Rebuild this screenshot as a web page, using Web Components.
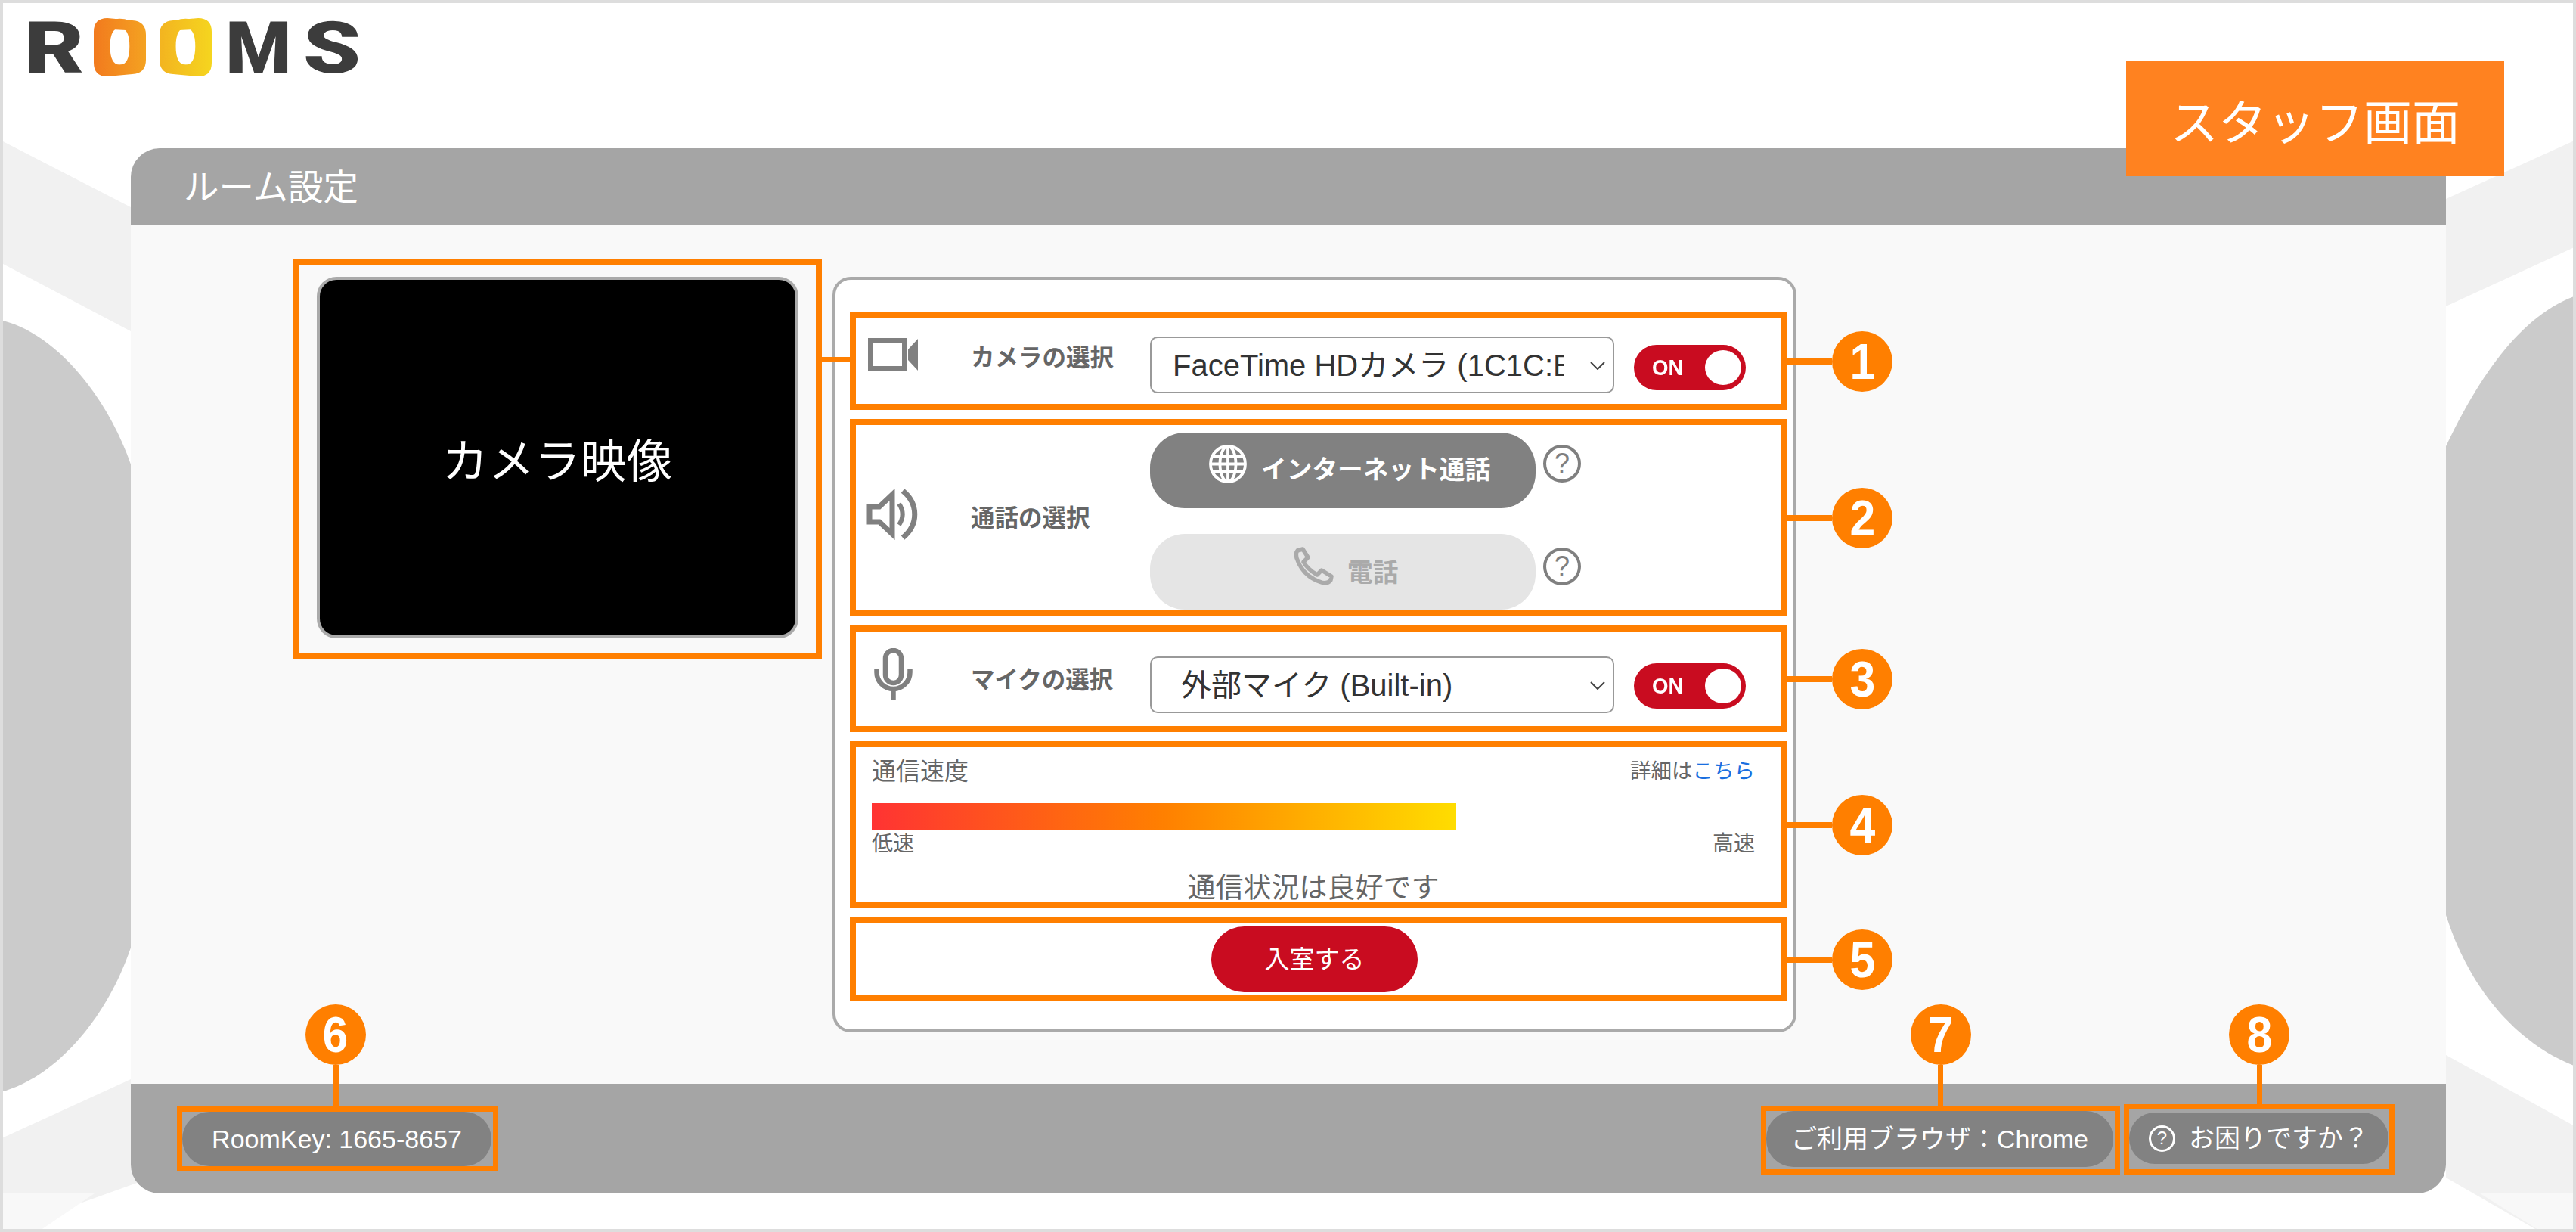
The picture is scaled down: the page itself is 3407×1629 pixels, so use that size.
<!DOCTYPE html>
<html lang="ja"><head><meta charset="utf-8"><title>ルーム設定</title>
<style>
html,body{margin:0;padding:0;background:#fff}
body{font-family:"Liberation Sans","Noto Sans CJK JP",sans-serif;color:#666}
</style></head><body>
<x-app>
  <x-bg></x-bg>
  <x-logo></x-logo>
  <x-staff-tag>スタッフ画面</x-staff-tag>
  <x-room-card>
    <span slot="title">ルーム設定</span>
    <x-camera-view>カメラ映像</x-camera-view>
    <x-settings-panel>
      <x-device-row style="--h:129px;--it:26px;--lt:36px;--ct:24px;--tt:35px">
        <x-icon slot="icon" name="camera"></x-icon>
        <span slot="label">カメラの選択</span>
        <x-select-box slot="control" style="--pl:28px;--tw:518px">FaceTime HDカメラ (1C1C:E</x-select-box>
        <x-toggle slot="toggle"></x-toggle>
        <x-callout n="1"></x-callout>
      </x-device-row>
      <x-device-row style="--h:261px;--it:84px;--lt:107px;--ct:10px;--tt:0px">
        <x-icon slot="icon" name="speaker"></x-icon>
        <span slot="label">通話の選択</span>
        <x-call-options slot="control">
          <x-call-button on style="--pad:78px;--gap:19px;--help:16px"><x-icon slot="icon" name="globe" style="margin-bottom:18px"></x-icon>インターネット通話</x-call-button>
          <x-call-button style="--pad:190px;--gap:17px;--help:18px"><x-icon slot="icon" name="phone" style="margin-bottom:15px"></x-icon><span style="margin-top:4px">電話</span></x-call-button>
        </x-call-options>
        <x-callout n="2"></x-callout>
      </x-device-row>
      <x-device-row style="--h:141px;--it:22px;--lt:48px;--ct:33px;--tt:42px">
        <x-icon slot="icon" name="mic"></x-icon>
        <span slot="label">マイクの選択</span>
        <x-select-box slot="control" style="--pl:39px;--tw:507px">外部マイク (Built-in)</x-select-box>
        <x-toggle slot="toggle"></x-toggle>
        <x-callout n="3"></x-callout>
      </x-device-row>
      <x-speed-meter>
        <x-callout n="4"></x-callout>
      </x-speed-meter>
      <x-enter-row>
        入室する
        <x-callout slot="callout" n="5"></x-callout>
      </x-enter-row>
    </x-settings-panel>
    <x-footer-pill slot="footer-left" n="6" style="--w:425px;--hh:86px;--pw:409px;--ph:72px;--pt:0px;--mt:30px;--len:55px;--dx:-3px">RoomKey: 1665-8657</x-footer-pill>
    <x-footer-pill slot="footer-right" n="7" style="--w:475px;--hh:91px;--pw:459px;--ph:74px;--pt:0px;--mt:29px;--len:54px;--dx:0px;--lw:7px">ご利用ブラウザ：Chrome</x-footer-pill>
    <x-footer-pill slot="footer-right" n="8" style="--w:358px;--hh:93px;--pw:343px;--ph:68px;--pt:4px;--mt:27px;--len:52px;--dx:0px;--lw:7px"><x-help-icon style="--s:35px;--b:3px;--c:#fff;--f:24px;margin-right:18px"></x-help-icon>お困りですか？</x-footer-pill>
  </x-room-card>
</x-app>
<script>
const ORANGE='#ff7f00';
function def(name,html,setup){
  customElements.define(name,class extends HTMLElement{
    constructor(){super();this.attachShadow({mode:'open'}).innerHTML=typeof html==='function'?html(this):html;}
    connectedCallback(){if(setup)setup(this)}
  });
}
const ICONS={
camera:`<svg width="66" height="44" viewBox="0 0 66 44"><rect x="3.5" y="3.5" width="45" height="37" fill="none" stroke="#808080" stroke-width="7"/><polygon points="53,15 66,1 66,43 53,29" fill="#808080"/></svg>`,
speaker:`<svg width="70" height="68" viewBox="0 0 70 68" fill="none" stroke="#808080" stroke-width="7"><path d="M4 24H17L34 8V60L17 44H4Z"/><path d="M43 20C49 29 49 39 43 48" stroke-width="6"/><path d="M48 3C69 20 69 48 48 65"/></svg>`,
mic:`<svg width="51" height="69" viewBox="0 0 51 69" fill="none" stroke="#808080" stroke-width="6.5"><rect x="15" y="3" width="21" height="43" rx="10.5"/><path d="M3.5 28V32A22 22 0 0 0 47.5 32V28"/><path d="M25.5 54V69"/></svg>`,
globe:`<svg width="50" height="51" viewBox="0 0 50 51" fill="none" stroke="#fff" stroke-width="3.8"><ellipse cx="25" cy="25.5" rx="23" ry="23.5"/><ellipse cx="25" cy="25.5" rx="10.5" ry="23.5"/><path d="M25 2V49M4 15H46M2 25.5H48M4 36H46"/></svg>`,
phone:`<svg width="54" height="51" viewBox="0 0 54 51" fill="none" stroke="#aaa" stroke-width="5.5" stroke-linejoin="round"><path d="M5 5 12 3 19 14 13 20C17 27 24 33 31 37L37 31 50 39 49 44C46 48 41 49 34 46 20 41 9 30 4 15 3 10 3 7 5 5Z"/></svg>`
};
def('x-icon',el=>`<style>:host{display:flex;align-items:center;justify-content:center;flex:none;line-height:0}svg{display:block}</style>`+ICONS[el.getAttribute('name')]);

def('x-app',`<style>
:host{display:block;position:relative;box-sizing:border-box;width:3407px;height:1629px;border:4px solid #ddd;background:#fff;overflow:hidden}
</style><slot></slot>`);

def('x-bg',`<style>:host{position:absolute;inset:-4px;display:block}svg{display:block}</style>
<svg width="3407" height="1629" viewBox="0 0 3407 1629">
<polygon points="0,185 173,274 173,438 0,347" fill="#f1f1f1"/>
<polygon points="0,1506 173,1427 184,1563 0,1629" fill="#f1f1f1"/>
<polygon points="0,1578 125,1578 50,1629 0,1629" fill="#f8f8f8"/>
<path d="M0 423C70 438 140 520 173 614V1253C140 1350 70 1427 0 1444Z" fill="#cbcbcb"/>
<polygon points="3407,185 3235,263 3235,405 3407,326" fill="#f1f1f1"/>
<polygon points="3235,1395 3407,1490 3407,1629 3360,1629 3235,1557" fill="#f1f1f1"/>
<polygon points="3280,1578 3407,1578 3407,1629 3362,1629" fill="#f8f8f8"/>
<path d="M3407 391C3340 415 3285 485 3235 590V1210C3270 1320 3340 1385 3407 1410Z" fill="#cbcbcb"/>
</svg>`);

const RING='M18 0 51 3Q69 4 69 22V55Q69 73 51 74L18 77Q0 77 0 59V18Q0 0 18 0ZM24 15Q20 15 20 20V57Q20 62 24 62L43 61Q49 61 49 55V22Q49 17 43 16Z';
def('x-logo',`<style>
:host{display:flex;position:relative;height:192px;box-sizing:border-box;padding:13px 0 0 30px;font:900 94px/94px Roboto,"Liberation Sans",sans-serif;color:#3c3c3c;align-items:flex-start}
span{display:block;text-align:center;flex:none;transform-origin:50% 50%}
.r{width:75px;transform:scaleX(1.3)}
.o{position:relative;width:69px;margin-top:7px;font:700 108px/89px "Liberation Mono",monospace;}
.o svg{position:absolute;left:0;top:0;display:block}
.o b{position:relative;display:block;font-weight:700;-webkit-background-clip:text;background-clip:text;color:transparent}
.o1{margin-left:15px}.o1 b{background-image:linear-gradient(90deg,#f27a1e,#f4a221)}
.o2{margin-left:18px}.o2 b{background-image:linear-gradient(90deg,#f3b420,#f5d51f)}
.m{width:86px;margin-left:19px;transform:scaleX(1.06)}
.s{width:70px;margin-left:19px;transform:scaleX(1.3)}
</style><span class="r">R</span><span class="o o1"><svg width="69" height="77" viewBox="0 0 69 77"><defs><linearGradient id="a"><stop offset="0" stop-color="#f27a1e"/><stop offset="1" stop-color="#f4a221"/></linearGradient></defs><path fill="url(#a)" fill-rule="evenodd" d="${RING}"/></svg><b>O</b></span><span class="o o2"><svg width="69" height="77" viewBox="0 0 69 77"><defs><linearGradient id="b" x1="1" x2="0"><stop offset="0" stop-color="#f3b420"/><stop offset="1" stop-color="#f5d51f"/></linearGradient></defs><path fill="url(#b)" fill-rule="evenodd" transform="matrix(-1 0 0 1 69 0)" d="${RING}"/></svg><b>O</b></span><span class="m">M</span><span class="s">S</span>`);

def('x-staff-tag',`<style>
:host{position:absolute;left:2808px;top:76px;width:500px;height:153px;background:#ff8220;color:#fff;display:flex;align-items:center;justify-content:center;font:400 64px/1 "Noto Sans CJK JP",sans-serif;z-index:3}
</style><slot></slot>`);

def('x-room-card',`<style>
:host{display:block;position:relative;margin-left:169px;width:3062px}
header{height:101px;box-sizing:border-box;background:#a5a5a5;border-radius:38px 38px 0 0;padding:0 0 4px 70px;display:flex;align-items:center;color:#fff;font:400 46.5px/1 "Noto Sans CJK JP",sans-serif}
main{height:1136px;box-sizing:border-box;background:#f9f9f9;display:flex;align-items:flex-start;padding-left:214px}
footer{height:145px;box-sizing:border-box;background:#a5a5a5;border-radius:0 0 38px 38px;display:flex;align-items:flex-start;padding:0 68px 0 61px;justify-content:space-between}
.right{display:flex;gap:5px;align-items:flex-start}
</style><header><slot name="title"></slot></header><main><slot></slot></main>
<footer><slot name="footer-left"></slot><div class="right"><slot name="footer-right"></slot></div></footer>`);

def('x-camera-view',`<style>
:host{display:flex;flex:none;position:relative;box-sizing:border-box;width:700px;height:529px;margin-top:45px;border:8px solid ${ORANGE};align-items:center;justify-content:center;padding-bottom:3px}
.v{width:637px;height:478px;box-sizing:border-box;border:4px solid #aaa;border-radius:26px;background:#000;color:#fff;display:flex;align-items:center;justify-content:center;font:400 61px/1 "Noto Sans CJK JP",sans-serif}
.l{position:absolute;left:calc(100% + 8px);top:122px;width:37px;height:7px;background:${ORANGE};z-index:2}
</style><div class="v"><slot></slot></div><div class="l"></div>`);

def('x-settings-panel',`<style>
:host{display:flex;flex-direction:column;gap:12px;flex:none;box-sizing:border-box;width:1275px;height:999px;margin:69px 0 0 14px;padding:43px 9px 0 19px;border:4px solid #aaa;border-radius:24px;background:#fff}
</style><slot></slot>`);

def('x-device-row',`<style>
:host{display:flex;align-items:flex-start;position:relative;box-sizing:border-box;height:var(--h);border:8px solid ${ORANGE};flex:none}
.i{width:98px;display:flex;justify-content:center;margin-top:var(--it);flex:none}
.t{width:237px;margin:var(--lt) 0 0 54px;font:700 31.5px/32px "Liberation Sans","Noto Sans CJK JP",sans-serif;color:#666;flex:none}
.c{margin-top:var(--ct);flex:none}
.o{margin:var(--tt) 0 0 26px;flex:none}
</style><div class="i"><slot name="icon"></slot></div><div class="t"><slot name="label"></slot></div><div class="c"><slot name="control"></slot></div><div class="o"><slot name="toggle"></slot></div><slot></slot>`);

def('x-select-box',`<style>
:host{display:flex;align-items:center;box-sizing:border-box;width:614px;height:75px;border:2px solid #999;border-radius:10px;background:#fff;position:relative;padding-left:var(--pl);font:400 40px/1 "Liberation Sans","Noto Sans CJK JP",sans-serif;color:#333}
.t{width:var(--tw);overflow:hidden;white-space:nowrap;flex:none;padding:6px 0}
svg{position:absolute;right:10px;top:31px}
</style><div class="t"><slot></slot></div><svg width="20" height="11" viewBox="0 0 20 11" fill="none" stroke="#444" stroke-width="2"><path d="M1 1 10 10 19 1"/></svg>`);

def('x-toggle',`<style>
:host{display:flex;align-items:center;justify-content:space-between;box-sizing:border-box;width:148px;height:60px;padding:0 6px 0 24px;border-radius:30px;background:#c90c20;color:#fff;font:700 30px/1 "Liberation Sans",sans-serif}
span{display:block;transform:scaleX(.92);transform-origin:0 50%}
i{display:block;width:48px;height:46px;border-radius:50%;background:#fff}
</style><span>ON</span><i></i>`);

def('x-call-options',`<style>:host{display:flex;flex-direction:column;gap:34px}</style><slot></slot>`);

def('x-call-button',el=>{const on=el.hasAttribute('on');return `<style>
:host{display:flex;align-items:flex-start;gap:10px}
.b{width:510px;height:100px;flex:none;box-sizing:border-box;border-radius:46px;background:${on?'#818181':'#e5e5e5'};color:${on?'#fff':'#aaa'};display:flex;align-items:center;gap:var(--gap);padding-left:var(--pad);font:700 33.7px/1 "Liberation Sans","Noto Sans CJK JP",sans-serif}
x-help-icon{margin-top:var(--help)}
</style><div class="b"><slot name="icon"></slot><slot></slot></div><x-help-icon></x-help-icon>`});

def('x-help-icon',`<style>
:host{display:flex;align-items:center;justify-content:center;flex:none;box-sizing:border-box;width:var(--s,50px);height:var(--s,50px);border:var(--b,4.5px) solid var(--c,#808080);border-radius:50%;color:var(--c,#808080);font:400 var(--f,36px)/1 "Liberation Sans",sans-serif}
</style>?`);

def('x-callout',el=>{const n=el.getAttribute('n');const up=el.getAttribute('dir')==='up';return `<style>
:host{position:absolute;display:flex;align-items:center;z-index:2;${up?'flex-direction:column;left:calc(50% + var(--dx,0px));bottom:calc(100% + 7px);transform:translateX(-50%)':'left:calc(100% + 8px);top:50%;transform:translateY(-50%)'}}
.l{background:${ORANGE};flex:none;${up?'width:var(--lw,8px);height:var(--len)':'width:60px;height:8px'}}
.c{width:80px;height:80px;border-radius:50%;background:${ORANGE};color:#fff;display:flex;align-items:center;justify-content:center;font:700 66px/1 "Liberation Sans",sans-serif;flex:none}
.c span{display:block;transform:scaleX(.92)}
</style>${up?`<div class="c"><span>${n}</span></div><div class="l"></div>`:`<div class="l"></div><div class="c"><span>${n}</span></div>`}`});

def('x-speed-meter',`<style>
:host{display:block;position:relative;box-sizing:border-box;height:221px;border:8px solid ${ORANGE};padding:12px 34px 0 21px;font-family:"Liberation Sans","Noto Sans CJK JP",sans-serif;color:#666;flex:none}
.h,.s{display:flex;justify-content:space-between;align-items:center}
.h{font-size:32px;line-height:40px;height:40px}
.d{font-size:27.5px}
a{color:#1a6fe0;text-decoration:none}
.bar{height:35px;width:773px;margin-top:22px;background:linear-gradient(90deg,#ff3333,#ff8000 50%,#ffdd00)}
.s{font-size:28px;line-height:30px;margin-top:4px}
.m{font-size:37px;line-height:40px;margin-top:24px;text-align:center}
</style><div class="h"><span>通信速度</span><span class="d">詳細は<a>こちら</a></span></div><div class="bar"></div><div class="s"><span>低速</span><span>高速</span></div><div class="m">通信状況は良好です</div><slot></slot>`);

def('x-enter-row',`<style>
:host{display:flex;position:relative;box-sizing:border-box;height:111px;border:8px solid ${ORANGE};align-items:center;justify-content:center;padding-right:10px;flex:none}
.b{width:273px;height:87px;border-radius:44px;background:#c90c20;color:#fff;display:flex;align-items:center;justify-content:center;font:400 33px/1 "Liberation Sans","Noto Sans CJK JP",sans-serif}
</style><div class="b"><slot></slot></div><slot name="callout"></slot>`);

def('x-footer-pill',el=>`<style>
:host{display:block;position:relative;box-sizing:border-box;width:var(--w);height:var(--hh);margin-top:var(--mt);border:7px solid ${ORANGE};flex:none}
.p{display:flex;align-items:center;justify-content:center;box-sizing:border-box;width:var(--pw);height:var(--ph);margin-top:var(--pt);background:#828282;border-radius:36px;color:#fff;font:400 34px/1 "Liberation Sans","Noto Sans CJK JP",sans-serif}
</style><div class="p"><slot></slot></div><x-callout dir="up" n="${el.getAttribute('n')}"></x-callout>`);
</script>
</body></html>
